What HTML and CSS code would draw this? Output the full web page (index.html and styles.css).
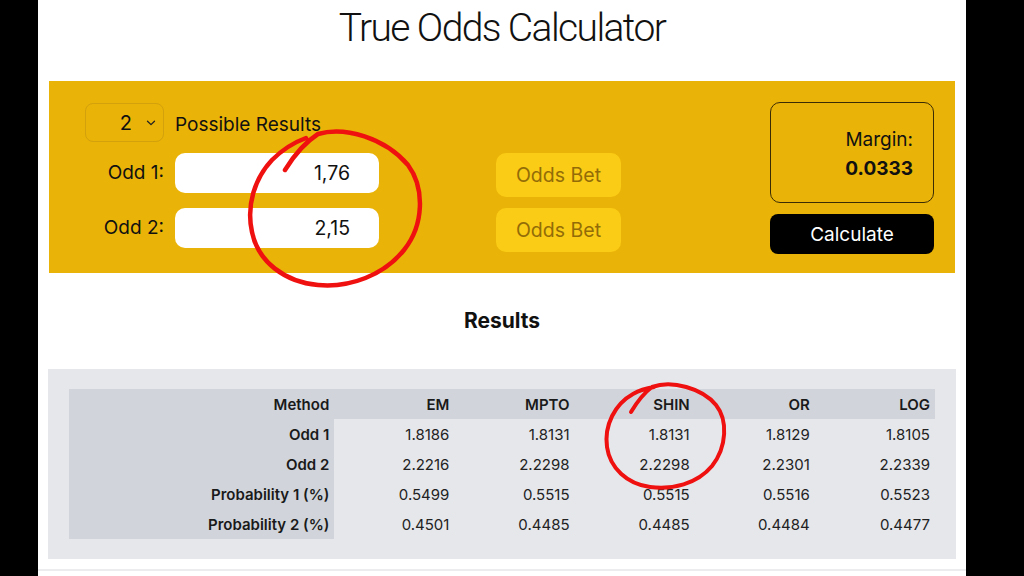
FILE: index.html
```html
<!DOCTYPE html>
<html lang="en">
<head>
<meta charset="utf-8">
<title>True Odds Calculator</title>
<link rel="stylesheet" href="styles.css">
</head>
<body>
<div class="page">
  <header class="head">
    <h1 class="title">True Odds Calculator</h1>
  </header>

  <section class="panel">
    <div class="inputs">
      <div class="select">
        <span class="select-value">2</span>
        <svg class="chev" width="10" height="6" viewBox="0 0 10 6"><path d="M1.5 1.2 L5 4.6 L8.5 1.2" fill="none" stroke="#222" stroke-width="1.3" stroke-linecap="round" stroke-linejoin="round"/></svg>
      </div>
      <div class="possible">Possible Results</div>

      <label class="odd-label">Odd 1:</label>
      <div class="odd-input">1,76</div>
      <button class="bet-btn">Odds Bet</button>

      <label class="odd-label">Odd 2:</label>
      <div class="odd-input">2,15</div>
      <button class="bet-btn">Odds Bet</button>
    </div>

    <div class="side">
      <div class="margin-box">
        <div class="margin-label">Margin:</div>
        <div class="margin-value">0.0333</div>
      </div>
      <button class="calc-btn">Calculate</button>
    </div>
  </section>

  <div class="results-head">
    <h2 class="results-title">Results</h2>
  </div>

  <section class="results">
    <table class="table">
      <thead>
        <tr><th class="rowhead">Method</th><th>EM</th><th>MPTO</th><th>SHIN</th><th>OR</th><th>LOG</th></tr>
      </thead>
      <tbody>
        <tr><th class="rowhead">Odd 1</th><td>1.8186</td><td>1.8131</td><td>1.8131</td><td>1.8129</td><td>1.8105</td></tr>
        <tr><th class="rowhead">Odd 2</th><td>2.2216</td><td>2.2298</td><td>2.2298</td><td>2.2301</td><td>2.2339</td></tr>
        <tr><th class="rowhead">Probability 1 (%)</th><td>0.5499</td><td>0.5515</td><td>0.5515</td><td>0.5516</td><td>0.5523</td></tr>
        <tr><th class="rowhead">Probability 2 (%)</th><td>0.4501</td><td>0.4485</td><td>0.4485</td><td>0.4484</td><td>0.4477</td></tr>
      </tbody>
    </table>
  </section>
  <div class="footer-line"></div>
</div>

<svg class="marks" width="1024" height="576" viewBox="0 0 1024 576">
  <path d="M285 170 C293 157 304 143 318 134 C345 126 385 138 408 165 C425 188 424 225 404 250 C384 275 350 288 318 285 C285 282 258 262 252 232 C246 205 255 178 272 160 C283 149 295 142 306 138" fill="none" stroke="#ef1010" stroke-width="4.5" stroke-linecap="round" stroke-linejoin="round"/>
  <path d="M631 412 C637 402 644 393 652 387 C672 380 702 388 716 405 C728 420 727 447 712 466 C697 484 672 490 650 487 C627 484 610 468 607 447 C604 425 615 404 633 394 C640 390 648 388 654 387" fill="none" stroke="#ef1010" stroke-width="4" stroke-linecap="round" stroke-linejoin="round"/>
</svg>
</body>
</html>
```

FILE: styles.css
```css
* { box-sizing: border-box; }

html, body {
  margin: 0;
  padding: 0;
  background: #000;
  font-family: "Inter", "Liberation Sans", sans-serif;
  color: #111;
}

body { position: relative; width: 1024px; height: 576px; overflow: hidden; }

.page {
  width: 928px;
  height: 576px;
  margin-left: 38px;
  background: #fff;
  padding: 0 11px 0 11px;
}

.head {
  height: 81px;
  padding-top: 5px;
  text-align: center;
}

.title {
  margin: 0;
  font-family: "Roboto", "Inter", sans-serif;
  font-size: 39px;
  line-height: 46px;
  font-weight: 300;
  letter-spacing: -1.6px;
  color: #111;
}

.panel {
  background: #eab308;
  display: flex;
  justify-content: space-between;
  align-items: flex-start;
  padding: 21px 21px 19px 36px;
}

.inputs {
  display: grid;
  grid-template-columns: 79px 204px 125px;
  grid-template-rows: 39px 44px 44px;
  column-gap: 11px;
  row-gap: 11px;
  margin-top: 1px;
  align-items: start;
}

.select {
  height: 39px;
  border: 1px solid #d2a10c;
  border-radius: 8px;
  display: flex;
  align-items: center;
  justify-content: flex-end;
  padding-right: 7px;
  gap: 14px;
  font-size: 20px;
}

.select-value { line-height: 1; }
.chev { display: block; margin-top: 1px; }

.possible {
  grid-column: 2 / 4;
  font-size: 19px;
  line-height: 39px;
  padding-top: 2px;
}

.odd-label {
  font-size: 19px;
  line-height: 40px;
  text-align: right;
  white-space: nowrap;
}

.odd-input {
  height: 40px;
  background: #fff;
  border-radius: 10px;
  font-size: 19.5px;
  line-height: 40px;
  text-align: right;
  padding-right: 29px;
}

.bet-btn {
  margin-left: 106px;
  width: 125px;
  height: 44px;
  border: 0;
  border-radius: 10px;
  background: #facc15;
  color: #936c08;
  font-family: inherit;
  font-size: 19.5px;
  padding: 0;
}

.side {
  width: 164px;
  display: flex;
  flex-direction: column;
  gap: 11px;
}

.margin-box {
  height: 101px;
  border: 1px solid #3a2c05;
  border-radius: 10px;
  display: flex;
  flex-direction: column;
  justify-content: center;
  align-items: flex-end;
  padding: 4px 20px 0 0;
  gap: 5px;
}

.margin-label { font-size: 19px; line-height: 24px; }
.margin-value { font-size: 19px; line-height: 24px; font-weight: 700; }

.calc-btn {
  height: 40px;
  border: 0;
  border-radius: 8px;
  background: #000;
  color: #fff;
  font-family: inherit;
  font-size: 19px;
  padding: 0;
}

.results-head {
  height: 96px;
  display: flex;
  align-items: center;
  justify-content: center;
}

.results-title {
  margin: 0;
  font-size: 21px;
  font-weight: 700;
  line-height: 24px;
}

.results {
  background: #e5e7eb;
  padding: 20px 20px 20px 21px;
  margin-left: -1px;
  margin-right: -1px;
}

.table {
  width: 866px;
  border-collapse: collapse;
  font-size: 15px;
}

.table th, .table td {
  height: 30px;
  padding: 0 5px 0 0;
  text-align: right;
  width: 120px;
  color: #1a1a1a;
}

.table thead th {
  background: #d1d5db;
  font-weight: 600;
}

.table .rowhead {
  width: 265px;
  background: #d1d5db;
  font-weight: 600;
}

.table td { font-weight: 400; color: #222; }

.footer-line {
  height: 2px;
  margin: 10px -11px 0;
  background: #ececee;
}

.marks {
  position: absolute;
  top: 0;
  left: 0;
  pointer-events: none;
}
```
